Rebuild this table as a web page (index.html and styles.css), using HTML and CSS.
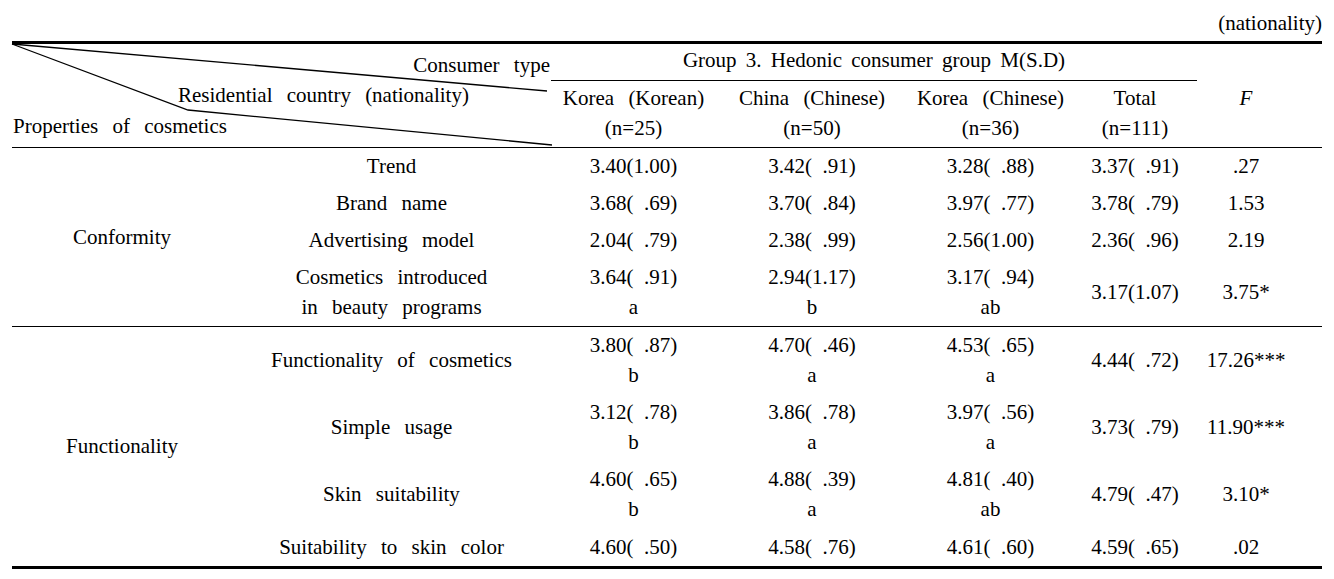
FILE: index.html
```html
<!DOCTYPE html>
<html lang="en">
<head>
<meta charset="utf-8">
<title>Hedonic consumer group</title>
<link rel="stylesheet" href="styles.css">
</head>
<body>
<div class="page">
  <div class="unit">(nationality)</div>
  <table class="stats">
    <colgroup>
      <col class="c1"><col class="c2"><col class="c3"><col class="c4"><col class="c5"><col class="c6"><col class="c7">
    </colgroup>
    <thead>
      <tr>
        <th class="diag" colspan="2" rowspan="2">
          <svg class="diag-lines" viewBox="0 0 539 103" width="539" height="103" aria-hidden="true">
            <polyline points="0,0 535,47" fill="none" stroke="#000" stroke-width="1.3"/>
            <polyline points="0,0 176,66 540,101" fill="none" stroke="#000" stroke-width="1.3"/>
          </svg>
          <div class="diag-text">
            <div class="d-consumer">Consumer type</div>
            <div class="d-resid">Residential country (nationality)</div>
            <div class="d-props">Properties of cosmetics</div>
          </div>
        </th>
        <th class="group" colspan="4">Group 3. Hedonic consumer group M(S.D)</th>
        <th class="fhead" rowspan="2"><i>F</i></th>
      </tr>
      <tr class="colheads">
        <th>Korea (Korean)<br>(n=25)</th>
        <th>China (Chinese)<br>(n=50)</th>
        <th>Korea (Chinese)<br>(n=36)</th>
        <th>Total<br>(n=111)</th>
      </tr>
    </thead>
    <tbody>
      <tr>
        <td class="cat sep" rowspan="4">Conformity</td>
        <td>Trend</td>
        <td>3.40(1.00)</td>
        <td>3.42(&ensp;.91)</td>
        <td>3.28(&ensp;.88)</td>
        <td>3.37(&ensp;.91)</td>
        <td class="f">.27</td>
      </tr>
      <tr>
        <td>Brand name</td>
        <td>3.68(&ensp;.69)</td>
        <td>3.70(&ensp;.84)</td>
        <td>3.97(&ensp;.77)</td>
        <td>3.78(&ensp;.79)</td>
        <td class="f">1.53</td>
      </tr>
      <tr>
        <td>Advertising model</td>
        <td>2.04(&ensp;.79)</td>
        <td>2.38(&ensp;.99)</td>
        <td>2.56(1.00)</td>
        <td>2.36(&ensp;.96)</td>
        <td class="f">2.19</td>
      </tr>
      <tr class="sep two">
        <td>Cosmetics introduced<br>in beauty programs</td>
        <td>3.64(&ensp;.91)<br>a</td>
        <td>2.94(1.17)<br>b</td>
        <td>3.17(&ensp;.94)<br>ab</td>
        <td>3.17(1.07)</td>
        <td class="f">3.75*</td>
      </tr>
      <tr class="two">
        <td class="cat" rowspan="4">Functionality</td>
        <td>Functionality of cosmetics</td>
        <td>3.80(&ensp;.87)<br>b</td>
        <td>4.70(&ensp;.46)<br>a</td>
        <td>4.53(&ensp;.65)<br>a</td>
        <td>4.44(&ensp;.72)</td>
        <td class="f">17.26***</td>
      </tr>
      <tr class="two">
        <td>Simple usage</td>
        <td>3.12(&ensp;.78)<br>b</td>
        <td>3.86(&ensp;.78)<br>a</td>
        <td>3.97(&ensp;.56)<br>a</td>
        <td>3.73(&ensp;.79)</td>
        <td class="f">11.90***</td>
      </tr>
      <tr class="two">
        <td>Skin suitability</td>
        <td>4.60(&ensp;.65)<br>b</td>
        <td>4.88(&ensp;.39)<br>a</td>
        <td>4.81(&ensp;.40)<br>ab</td>
        <td>4.79(&ensp;.47)</td>
        <td class="f">3.10*</td>
      </tr>
      <tr class="last">
        <td>Suitability to skin color</td>
        <td>4.60(&ensp;.50)</td>
        <td>4.58(&ensp;.76)</td>
        <td>4.61(&ensp;.60)</td>
        <td>4.59(&ensp;.65)</td>
        <td class="f">.02</td>
      </tr>
    </tbody>
  </table>
</div>
</body>
</html>
```
FILE: styles.css
```css
html, body {
  margin: 0;
  padding: 0;
  background: #fff;
}

body {
  font-family: "Liberation Serif", "Tinos", "Times New Roman", serif;
  font-size: 21px;
  line-height: 30px;
  color: #000;
  word-spacing: 9px;
}

.page {
  padding: 8px 12px 0 12px;
  width: 1310px;
}

.unit {
  text-align: right;
  height: 30px;
  padding-bottom: 3px;
  word-spacing: 0;
}

.stats {
  width: 1310px;
  table-layout: fixed;
  border-collapse: separate;
  border-spacing: 0;
  border-top: 3px solid #000;
  border-bottom: 3px solid #000;
}

.c1 { width: 220px; }
.c2 { width: 319px; }
.c3 { width: 165px; }
.c4 { width: 192px; }
.c5 { width: 165px; }
.c6 { width: 124px; }
.c7 { width: 125px; }

.stats th,
.stats td {
  font-weight: normal;
  text-align: center;
  vertical-align: middle;
  padding: 3px 0 4px 0;
  white-space: nowrap;
}

.stats th.group {
  padding: 1px 0 5px 0;
  border-bottom: 1px solid #000;
  word-spacing: 4px;
}

.colheads th {
  padding: 2px 0 4px 0;
  border-bottom: 1px solid #000;
}

.stats th.fhead {
  border-bottom: 1px solid #000;
  padding: 5px 27px 0 0;
}

.stats th.diag {
  position: relative;
  vertical-align: top;
  text-align: left;
  padding: 6px 0 0 0;
  border-bottom: 1px solid #000;
}

.diag-lines {
  position: absolute;
  left: 0;
  top: 0;
  overflow: visible;
}

.diag-text {
  display: flex;
  flex-direction: column;
}

.d-consumer {
  text-align: right;
  padding-right: 1px;
}

.d-resid {
  padding-left: 166px;
}

.d-props {
  padding-left: 1px;
  margin-top: 1px;
}

.stats td.f {
  padding-right: 27px;
}

.stats tr.sep td,
.stats td.sep {
  border-bottom: 1px solid #000;
}

.stats tr.two td {
  padding: 3px 0 4px 0;
}

.stats tr.two td.f {
  padding-right: 27px;
}

.stats tr.last td {
  padding: 4px 0 4px 0;
}

.stats tr.last td.f {
  padding-right: 27px;
}
```
